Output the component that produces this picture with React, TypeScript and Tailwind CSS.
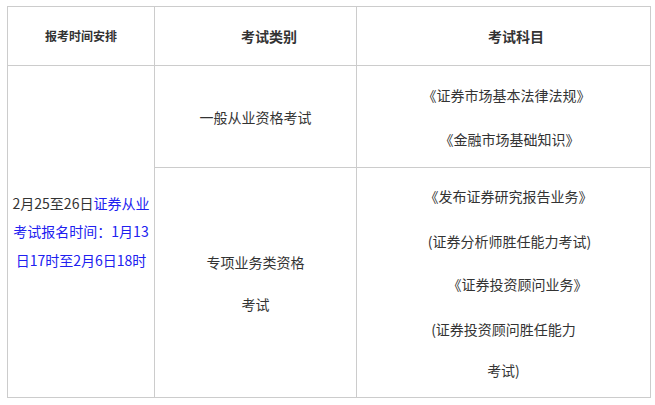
import React from "react";

const font = { fontFamily: '"Noto Sans CJK SC", "Noto Sans", sans-serif' };

export default function App() {
  return (
    <div className="w-[655px] h-[405px] bg-white pl-[7px] pt-[6px]" style={font}>
      <div className="grid grid-cols-[146px_201px_293px] grid-rows-[58px_101px_229px] gap-px bg-[#cccccc] p-px w-[644px] text-[#333333] text-[14px]">
        <div className="bg-white flex items-center justify-center font-bold text-[12px]">报考时间安排</div>
        <div className="bg-white flex items-center justify-center font-bold pl-[27px]">考试类别</div>
        <div className="bg-white flex items-center justify-center font-bold pl-[25px]">考试科目</div>

        <div className="bg-white row-span-2 flex flex-col items-center justify-center leading-[28.5px] whitespace-nowrap">
          <div>
            2月25至26日<span className="text-[#2020f0]">证券从业</span>
          </div>
          <div className="text-[#2020f0]">考试报名时间：1月13</div>
          <div className="text-[#2020f0]">日17时至2月6日18时</div>
        </div>

        <div className="bg-white flex items-center justify-center leading-[22px]">一般从业资格考试</div>
        <div className="bg-white flex flex-col items-center justify-center leading-[22px] whitespace-nowrap">
          <div className="pl-[6px]">《证券市场基本法律法规》</div>
          <div className="mt-[22px] pl-[12px]">《金融市场基础知识》</div>
        </div>

        <div className="bg-white flex flex-col items-center justify-center leading-[22px]">
          <div>专项业务类资格</div>
          <div className="mt-[20px]">考试</div>
        </div>
        <div className="bg-white flex flex-col items-center justify-center leading-[22px] whitespace-nowrap">
          <div className="pl-[10px]">《发布证券研究报告业务》</div>
          <div className="mt-[23px] pl-[12px]">(证券分析师胜任能力考试)</div>
          <div className="mt-[21px] pl-[28px]">《证券投资顾问业务》</div>
          <div className="mt-[23px]">(证券投资顾问胜任能力</div>
          <div className="mt-[19px]">考试)</div>
        </div>
      </div>
    </div>
  );
}
